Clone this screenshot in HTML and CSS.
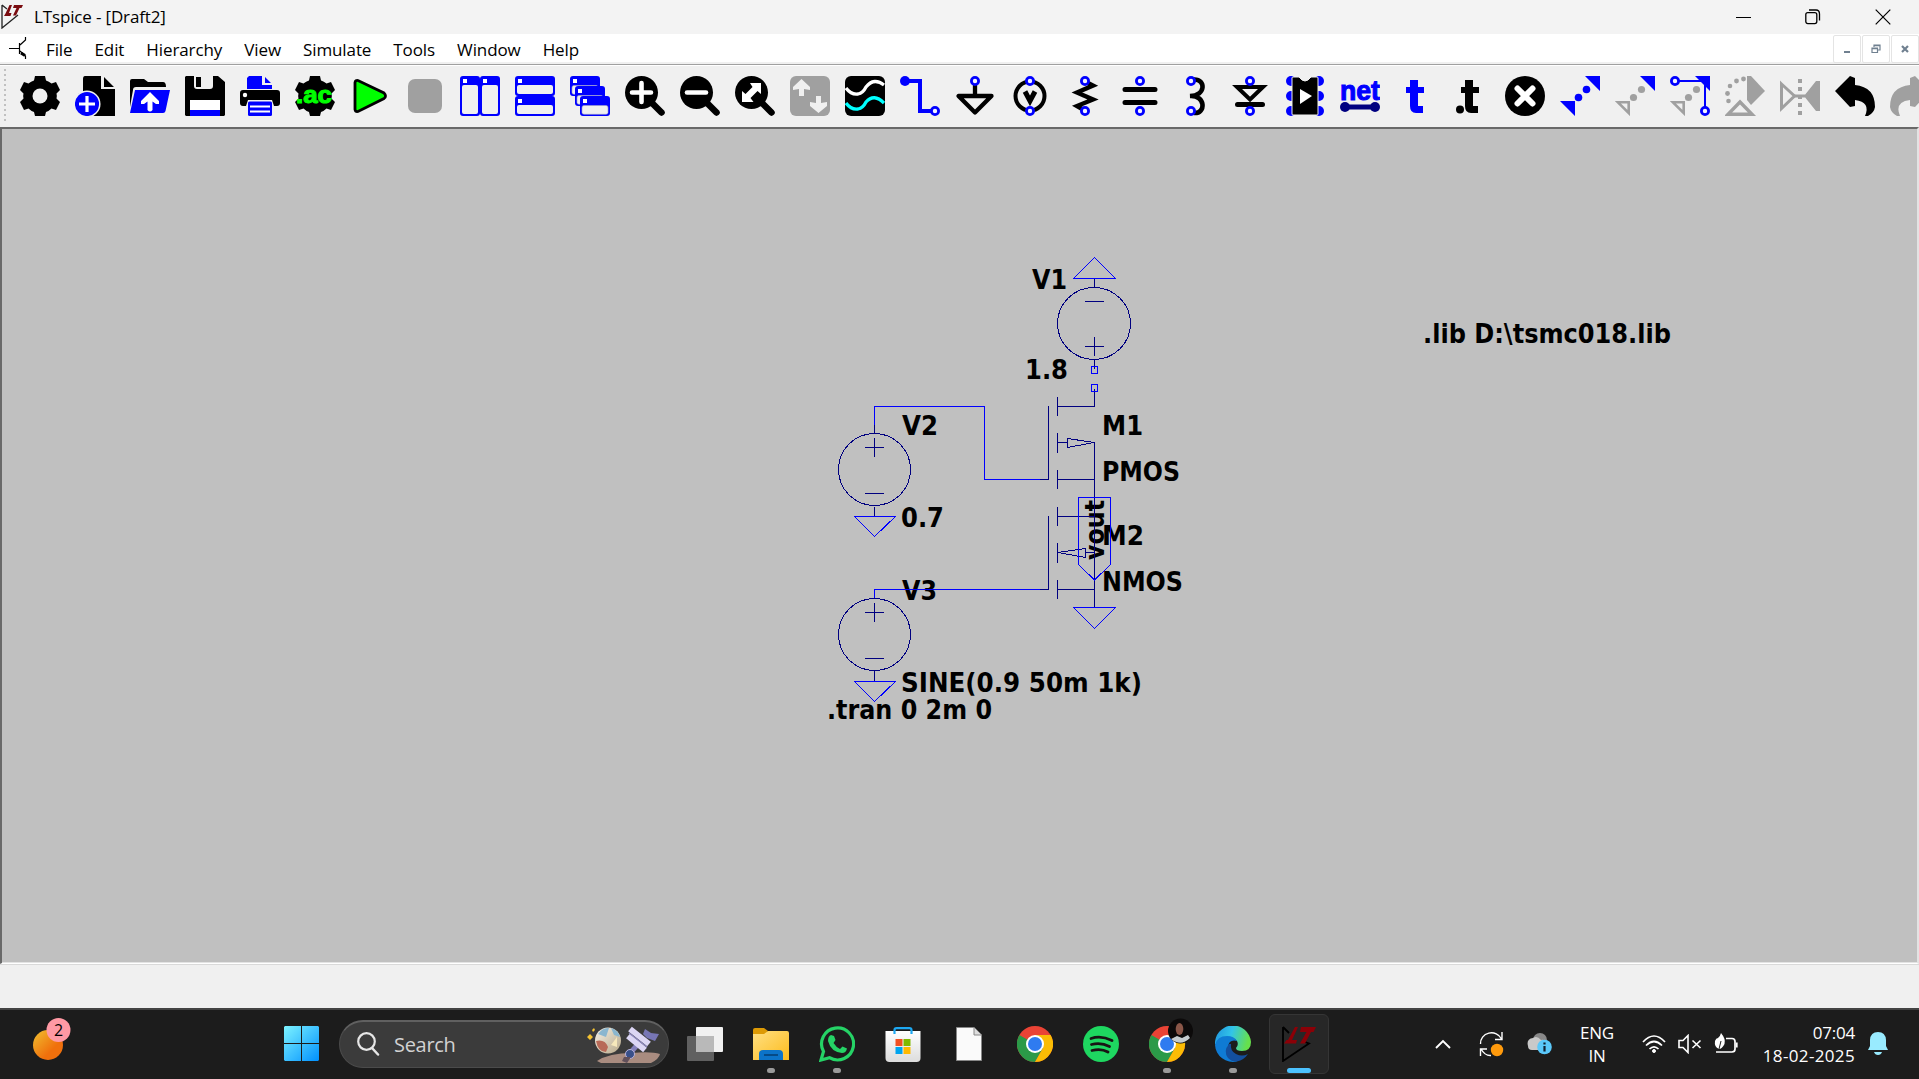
FILE: index.html
```
<!DOCTYPE html>
<html lang="en">
<head>
<meta charset="utf-8">
<title>LTspice - [Draft2]</title>
<link rel="stylesheet" href="styles.css">
</head>
<body>
<svg class="defs" width="0" height="0" aria-hidden="true">
  <defs>
    <path id="gear" d="M15 0H25L26 4.5Q29 5.500 31.500 7.500L36 6L40 14L36.500 17.500Q37.200 20 36.500 22.500L40 26L36 34L31.500 32.500Q29 35 26 36L25 40H15L14 36Q11 35 8.500 32.500L4 34L0 26L3.500 22.500Q2.800 20 3.500 17.500L0 14L4 6L8.500 7.500Q11 5.500 14 4.500Z"/>
    <g id="win"><rect x="0" y="0" width="30" height="20" rx="3" fill="#00f"/><rect x="2" y="9.500" width="26" height="8.800" rx="2" fill="#f0f0f0" stroke="#a0a0c8" stroke-width=".6"/><rect x="3" y="3" width="4" height="4" fill="#fff"/></g>
    <g id="lens"><path d="M25 25L36.500 36.500" stroke="#000" stroke-width="6.500" stroke-linecap="round"/><circle cx="16.500" cy="16.500" r="16.500"/></g>
    <circle id="pin" r="3.600" fill="#f4f4ff" stroke="#00f" stroke-width="2.800"/>
    <path id="tee" d="M15 4h8v7h6v6h-6v13h5v7h-7q-6 0-6-7v-13h-4v-6h4z"/>
    <path id="bend" d="M0 15L15 0L20 2V9Q40 11 40 31Q39 37 33 40H30Q36 26 20 24V30L15 31Z"/>
    <g id="chrome">
      <circle cx="18" cy="18" r="18" fill="#ea4335"/>
      <path d="M18 18L2.400 9A18 18 0 0 0 18 36L26 22Z" fill="#2b9a48"/>
      <path d="M18 9H33.600A18 18 0 0 1 18 36L26 22Z" fill="#fbbc05"/>
      <circle cx="18" cy="18" r="9" fill="#fff"/><circle cx="18" cy="18" r="7" fill="#2f7bf0"/>
    </g>
    <linearGradient id="gSun" x1="0" y1="0" x2="1" y2="1"><stop offset="0" stop-color="#f0c030"/><stop offset=".65" stop-color="#f0700c"/></linearGradient>
    <linearGradient id="gWin" x1="0" y1="0" x2="1" y2="1"><stop offset="0" stop-color="#7df3ff"/><stop offset="1" stop-color="#0090ff"/></linearGradient>
    <linearGradient id="gFold" x1="0" y1="0" x2="1" y2="1"><stop offset="0" stop-color="#ffe083"/><stop offset="1" stop-color="#fdbb1c"/></linearGradient>
    <linearGradient id="gEdge" x1="0" y1="0" x2="1" y2=".2"><stop offset="0" stop-color="#1e93e0"/><stop offset=".5" stop-color="#32c4e8"/><stop offset="1" stop-color="#66e04c"/></linearGradient>
    <linearGradient id="gBag" x1="0" y1="0" x2="0" y2="1"><stop offset="0" stop-color="#fff"/><stop offset="1" stop-color="#dcdcdc"/></linearGradient>
    <linearGradient id="gBall" x1="0" y1="0" x2="1" y2="1"><stop offset="0" stop-color="#f4f0e6"/><stop offset="1" stop-color="#b8a98a"/></linearGradient>
  </defs>
</svg>

<div class="screen">
  <header class="titlebar">
    <svg class="app-logo" width="22" height="26" viewBox="0 0 22 26"><path d="M1 2V25L17 12M1 2L6 6" fill="none" stroke="#222" stroke-width="1.300"/><path d="M8.500 2H11L8 10H10.500L9.500 13H3L4.500 10.500Z" fill="#7a0c10"/><path d="M13 2H22L20.500 5H18.500L15 12.500H12L15.500 5H12Z" fill="#7a0c10"/></svg>
    <span class="title">LTspice - [Draft2]</span>
    <div class="win-controls">
      <svg width="15" height="16" viewBox="0 0 15 16"><path d="M0 8.500H15" stroke="#000"/></svg>
      <svg width="16" height="16" viewBox="0 0 16 16" fill="none" stroke="#000" stroke-width="1.300"><rect x=".8" y="3.600" width="11" height="11" rx="2"/><path d="M4 1H11Q14.500 1 14.500 5V11.500"/></svg>
      <svg width="16" height="16" viewBox="0 0 16 16"><path d="M.7 .7L15.300 15.300M15.300 .7L.7 15.300" stroke="#000" stroke-width="1.200"/></svg>
    </div>
  </header>

  <nav class="menubar">
    <svg class="doc-icon" width="14" height="24" viewBox="0 0 14 24" fill="none" stroke="#000"><path d="M-3 12.500H7M7.500 7V18M8 9L13.500 4V1M8 15L13.500 20V23" stroke-width="1.200"/><path d="M9 17L13 19.500" stroke-width="3"/></svg>
    <ul class="menu"><li>File</li><li>Edit</li><li>Hierarchy</li><li>View</li><li>Simulate</li><li>Tools</li><li>Window</li><li>Help</li></ul>
    <div class="mdi">
      <span><svg width="10" height="10" viewBox="0 0 10 10"><path d="M2 8H8" stroke="#708090" stroke-width="2"/></svg></span>
      <span><svg width="10" height="10" viewBox="0 0 10 10" fill="none" stroke="#708090" stroke-width="1.200"><path d="M1 4H6.500V8.500H1ZM1 4.700H6.500M3 3V1.200H9V6H7M3 1.700H9"/></svg></span>
      <span><svg width="10" height="10" viewBox="0 0 10 10"><path d="M2 2L8 8M8 2L2 8" stroke="#708090" stroke-width="2.200"/></svg></span>
    </div>
  </nav>

  <div class="toolbar">
    <span class="grip"></span>
    <svg class="tool" viewBox="0 0 40 40"><use href="#gear"/><circle cx="20" cy="20" r="7.500" fill="#f0f0f0"/></svg>
    <svg class="tool" viewBox="0 0 40 40"><path d="M10 0H26V13H40V40H8V3Q8 0 10 0ZM29 1L39 11H29Z"/><circle cx="12" cy="28" r="12.800" fill="#00f" stroke="#f0f0f0" stroke-width="1.500"/><path d="M12 20V36M4 28H20" stroke="#fff" stroke-width="3.200"/></svg>
    <svg class="tool" viewBox="0 0 40 40"><path d="M0 31V5Q0 3 2 3H14L18 6H33Q36 6 36 11H6Q3 11 3 14Z"/><path d="M5 14H40L35.500 35Q35 37 33 37H0Z" fill="#00f"/><path d="M20 16L29 25V28H26L22.500 25.500V34Q20 37 17.500 34V25.500L14 28H11V25Z" fill="#fff"/></svg>
    <svg class="tool" viewBox="0 0 40 40"><path d="M1 0H9V10Q9 13 12 13H25Q28 13 28 10V0H33L40 6V39L39 40H1L0 39V1Z"/><path d="M11 1H16V11H11Z"/><path d="M5 24H35V34H5Z" fill="#fff"/><path d="M5 34H35V40H5Z" fill="#00f"/></svg>
    <svg class="tool" viewBox="0 0 40 40"><path d="M9 0H22V9H32V13H7V2ZM25 1L31 7H25Z" fill="#00f"/><path d="M3 14H37Q40 14 40 17V27Q40 30 37 30H34L32 24H8L6 30H3Q0 30 0 27V17Q0 14 3 14Z"/><circle cx="5" cy="19" r="2.200" fill="#fff"/><rect x="8" y="25.500" width="24" height="14.500" rx="1.500" fill="#00f"/><path d="M10 30.500H30M10 35.500H30" stroke="#fff" stroke-width="1.800"/></svg>
    <svg class="tool" viewBox="0 0 40 40"><use href="#gear"/><text class="ac" x="1" y="27" textLength="36" lengthAdjust="spacingAndGlyphs">.ac</text></svg>
    <svg class="tool" viewBox="0 0 40 40"><path d="M5 6.500Q5.500 4 8 4.500L34 17Q37 20 34 22.500L8 35.500Q5.500 36 5 33.500Z" fill="#0f0" stroke="#000" stroke-width="2.800"/></svg>
    <svg class="tool" viewBox="0 0 40 40"><rect x="3" y="3" width="34" height="34" rx="7" fill="#a0a0a0"/></svg>
    <svg class="tool" viewBox="0 0 40 40"><g id="tall"><rect width="20" height="40" rx="3" fill="#00f"/><rect x="2" y="9" width="16" height="29" rx="2" fill="#f0f0f0"/><rect x="3" y="3" width="4" height="4" fill="#fff"/></g><use href="#tall" x="20"/></svg>
    <svg class="tool" viewBox="0 0 40 40"><g id="wide"><rect width="40" height="20" rx="3" fill="#00f"/><rect x="2" y="9" width="36" height="9" rx="2" fill="#f0f0f0"/><rect x="3" y="3" width="4" height="4" fill="#fff"/></g><use href="#wide" y="20"/></svg>
    <svg class="tool" viewBox="0 0 40 40"><use href="#win"/><use href="#win" x="5" y="10"/><use href="#win" x="10" y="20"/></svg>
    <svg class="tool" viewBox="0 0 40 40"><use href="#lens"/><path d="M16.500 7V26M7 16.500H26" stroke="#fff" stroke-width="4.600" stroke-linecap="round"/></svg>
    <svg class="tool" viewBox="0 0 40 40"><use href="#lens"/><path d="M7 16.500H26" stroke="#fff" stroke-width="4.600" stroke-linecap="round"/></svg>
    <svg class="tool" viewBox="0 0 40 40"><use href="#lens"/><path d="M15 7H26V18L22.500 15L15.500 22L18.500 26H7V15L10.500 18L17.500 11Z" fill="#fff"/></svg>
    <svg class="tool" viewBox="0 0 40 40"><rect width="40" height="40" rx="6" fill="#a0a0a0"/><path d="M11.500 3L20 11V14L14 13V20H9V13L3 14V11ZM28.500 37L20 30V26L26 27V20H31V27L37 26V30Z" fill="#f0f0f0"/></svg>
    <svg class="tool" viewBox="0 0 40 40"><rect width="40" height="40" rx="6"/><path d="M1 12Q6 19 13 18Q18 17 21 11Q29 1 39 9" fill="none" stroke="#fff" stroke-width="3.300"/><path d="M1 27Q6 34 13 33Q18 32 21 26Q29 17 39 27" fill="none" stroke="#0ff" stroke-width="3.300"/></svg>
    <svg class="tool" viewBox="0 0 40 40"><path d="M5 5H20V35H31" fill="none" stroke="#00f" stroke-width="4"/><circle cx="5" cy="5" r="5" fill="#00f"/><use href="#pin" x="35" y="35"/></svg>
    <svg class="tool" viewBox="0 0 40 40"><path d="M20 9V20M3.500 20H36.500L20 36.500Z" fill="none" stroke="#000" stroke-width="4.300" stroke-linejoin="round"/><use href="#pin" x="20" y="5"/></svg>
    <svg class="tool" viewBox="0 0 40 40"><circle cx="20" cy="20" r="14.500" fill="none" stroke="#000" stroke-width="4"/><path d="M15 15.500L20 25L25 15.500" fill="none" stroke="#000" stroke-width="5"/><use href="#pin" x="20" y="5"/><use href="#pin" x="20" y="35"/></svg>
    <svg class="tool" viewBox="0 0 40 40"><path d="M22 6.500L28 9.500L12 16.500L28 23.500L12 30L19 34" fill="none" stroke="#000" stroke-width="4.400"/><use href="#pin" x="20" y="5"/><use href="#pin" x="20" y="35"/></svg>
    <svg class="tool" viewBox="0 0 40 40"><path d="M5 13.500H35M5 26.500H35" stroke="#000" stroke-width="5" stroke-linecap="round"/><use href="#pin" x="20" y="5"/><use href="#pin" x="20" y="35"/></svg>
    <svg class="tool" viewBox="0 0 40 40"><path d="M19 3.500C31 3 31 20 15 20C31 19 31 38 19 37" fill="none" stroke="#000" stroke-width="4.600"/><use href="#pin" x="16" y="5"/><use href="#pin" x="16" y="35"/></svg>
    <svg class="tool" viewBox="0 0 40 40"><path d="M7 11H33L20 23.500Z" fill="#f0f0f0" stroke="#000" stroke-width="4"/><path d="M7.500 28.500H32.500" stroke="#000" stroke-width="5" stroke-linecap="round"/><use href="#pin" x="20" y="5"/><use href="#pin" x="20" y="35"/></svg>
    <svg class="tool" viewBox="0 0 40 40"><g fill="#00f"><circle cx="6" cy="5" r="5"/><circle cx="6" cy="20" r="5"/><circle cx="6" cy="35" r="5"/><circle cx="34" cy="5" r="5"/><circle cx="34" cy="20" r="5"/><circle cx="34" cy="35" r="5"/></g><path d="M8 1H14Q20 9 26 1H32Q33 1 33 2V38Q33 39 32 39H8Q7 39 7 38V2Q7 1 8 1Z" stroke="#f0f0f0"/><path d="M15 13L27 20L15 28Z" fill="#fff"/></svg>
    <svg class="tool" viewBox="0 0 40 40"><text class="net" x="0" y="23.500" textLength="40" lengthAdjust="spacingAndGlyphs">net</text><path d="M5 31H35" stroke="#000080" stroke-width="5"/><circle cx="5" cy="31" r="5" fill="#000080"/><circle cx="35" cy="31" r="5" fill="#000080"/></svg>
    <svg class="tool" viewBox="0 0 40 40"><use href="#tee" fill="#00f"/></svg>
    <svg class="tool" viewBox="0 0 40 40"><use href="#tee"/><circle cx="10" cy="33.500" r="4"/></svg>
    <svg class="tool" viewBox="0 0 40 40"><circle cx="20" cy="20" r="20"/><path d="M12.500 12.500L27.500 27.500M27.500 12.500L12.500 27.500" stroke="#fff" stroke-width="6" stroke-linecap="round"/></svg>
    <svg class="tool" viewBox="0 0 40 40" fill="#00f"><path d="M25 0H40V15ZM0 25H15V40Z"/><circle cx="26.500" cy="13.500" r="3.800"/><circle cx="18.500" cy="21.500" r="3.800"/></svg>
    <svg class="tool" viewBox="0 0 40 40" fill="#a0a0a0"><path d="M25 0H40V15Z" fill="#00f"/><path d="M3 26.300H13.700V37Z" fill="none" stroke="#a0a0a0" stroke-width="2.600"/><circle cx="26.500" cy="13.500" r="3.600"/><circle cx="18.500" cy="21.500" r="3.600"/></svg>
    <svg class="tool" viewBox="0 0 40 40" fill="#a0a0a0"><path d="M25 0H40V15Z" fill="#00f"/><path d="M3 26.300H13.700V37Z" fill="none" stroke="#a0a0a0" stroke-width="2.600"/><circle cx="26.500" cy="13.500" r="3.600"/><circle cx="18.500" cy="21.500" r="3.600"/><path d="M5 5H35V35" fill="none" stroke="#00f" stroke-width="2"/><use href="#pin" x="5" y="5"/><use href="#pin" x="35" y="35"/></svg>
    <svg class="tool" viewBox="0 0 40 40" fill="#a0a0a0"><path d="M22 0H26L40 15L26 29L22 24Z"/><path d="M3 38.300H27L15 26Z" fill="#f0f0f0" stroke="#a0a0a0" stroke-width="3.400"/><circle cx="18.500" cy="3" r="2.400"/><circle cx="11.500" cy="5" r="2.400"/><circle cx="5" cy="10" r="2.300"/><circle cx="2.500" cy="17.500" r="2.400"/><circle cx="3.500" cy="25" r="2.300"/></svg>
    <svg class="tool" viewBox="0 0 40 40" fill="#a0a0a0"><path d="M1.500 8L14.500 20L1.500 32.500Z" fill="none" stroke="#a0a0a0" stroke-width="3"/><path d="M40 5V35H36L24 20L36 5ZM13 18.500H26V21.500H13Z"/><path d="M20 3V40" stroke="#a0a0a0" stroke-width="4" stroke-dasharray="4 4"/></svg>
    <svg class="tool" viewBox="0 0 40 40"><use href="#bend"/></svg>
    <svg class="tool" viewBox="0 0 40 40" fill="#a0a0a0"><use href="#bend" transform="translate(40 0) scale(-1 1)"/></svg>
  </div>

  <main class="canvas">
    <svg class="schematic" width="1915" height="834" viewBox="2 129 1915 834">
      <g class="text">
        <text x="1032" y="288.500" textLength="35" lengthAdjust="spacingAndGlyphs">V1</text>
        <text x="1025" y="379" textLength="43" lengthAdjust="spacingAndGlyphs">1.8</text>
        <text x="902" y="434.500" textLength="36" lengthAdjust="spacingAndGlyphs">V2</text>
        <text x="901" y="526.500" textLength="43" lengthAdjust="spacingAndGlyphs">0.7</text>
        <text x="1102" y="434.500" textLength="41" lengthAdjust="spacingAndGlyphs">M1</text>
        <text x="1102" y="480.500" textLength="78" lengthAdjust="spacingAndGlyphs">PMOS</text>
        <text x="1102" y="544.500" textLength="42" lengthAdjust="spacingAndGlyphs">M2</text>
        <text x="1102" y="590.500" textLength="81" lengthAdjust="spacingAndGlyphs">NMOS</text>
        <text x="902" y="599.500" textLength="35" lengthAdjust="spacingAndGlyphs">V3</text>
        <text x="901" y="691.500" textLength="241" lengthAdjust="spacingAndGlyphs">SINE(0.9 50m 1k)</text>
        <text x="827" y="718.500" textLength="165" lengthAdjust="spacingAndGlyphs">.tran 0 2m 0</text>
        <text x="1423" y="343" textLength="248" lengthAdjust="spacingAndGlyphs">.lib D:\tsmc018.lib</text>
        <text transform="translate(1104 560) rotate(-90)" textLength="60" lengthAdjust="spacingAndGlyphs">vout</text>
      </g>
      <g class="part">
        <path d="M1094.500 278V287.500M1085 301.500H1104M1085 346.500H1104M1094.500 337V356M1094.500 359.500V369M1094.500 389V406.500H1057.500M1057.500 397V416M1048.500 406V479.500H1040M1057.500 433V453M1057.500 442.500H1067.500V438.500L1094 442.500L1067.500 447.500V442.500M1094.500 442V607M1057.500 470V489M1057.500 479.500H1094.500"/>
        <ellipse cx="1094" cy="323.500" rx="36.500" ry="36"/>
        <path d="M874.500 425V433.500M865 447.500H884M874.500 438V457M865 493.500H884M874.500 506.500V516"/>
        <circle cx="874.500" cy="469.500" r="36"/>
        <path d="M1057.500 507V526M1057.500 516.500H1094.500M1048.500 516V589.500H1040M1057.500 543V563M1094 552.500H1085.500V548.500L1058 552.500L1085.500 557.500V552.500M1057.500 580V599M1057.500 589.500H1094.500"/>
        <path d="M874.500 589.500V598.500M865 612.500H884M874.500 603V622M865 658.500H884M874.500 670.500V681"/>
        <circle cx="874.500" cy="634.500" r="36"/>
      </g>
      <g class="wire">
        <path d="M1073.500 278.500H1115.500L1094.500 257.500Z"/>
        <path d="M1091.500 366.500H1097.500V373.500H1091.500ZM1091.500 384.500H1097.500V391.500H1091.500Z"/>
        <path d="M874.500 425V406.500H984.500V479.500H1040"/>
        <path d="M854.500 516.500H895.500L874.500 536.500Z"/>
        <path d="M1078.500 497.500H1110.500V564.500L1094.500 580L1078.500 564.500Z"/>
        <path d="M1073.500 607.500H1115.500L1094.500 628.500Z"/>
        <path d="M874.500 598V589.500H1040"/>
        <path d="M854.500 681.500H895.500L874.500 701.500Z"/>
      </g>
    </svg>
  </main>
  <div class="statusbar"></div>

  <footer class="taskbar">
    <div class="widget"><svg width="42" height="44" viewBox="0 0 42 44"><circle cx="15" cy="29" r="15" fill="url(#gSun)"/><circle cx="25.500" cy="14" r="12" fill="#ff99a4"/></svg><span class="badge">2</span></div>
    <svg class="start" width="35" height="35" viewBox="0 0 35 35"><path d="M1 0H17V17H0V1ZM18 0H34L35 1V17H18ZM0 18H17V35H1L0 34ZM18 18H35V34L34 35H18Z" fill="url(#gWin)"/></svg>
    <div class="search">
      <svg width="23" height="24" viewBox="0 0 23 24"><circle cx="9.500" cy="9.500" r="8.300" fill="none" stroke="#e6e6e6" stroke-width="2.200"/><path d="M15 16L21 22.500" stroke="#e6e6e6" stroke-width="2.500" stroke-linecap="round"/></svg>
      <span>Search</span>
      <svg class="art" width="74" height="38" viewBox="0 0 74 38">
        <path d="M10 36Q22 28 45 28Q64 26 73 29Q72 34 64 38H14Z" fill="#a98c80"/>
        <circle cx="21" cy="15.500" r="13" fill="url(#gBall)"/><path d="M9 16Q18 14 21 22L19 27Q11 27 9 16Z" fill="#b86a58"/><path d="M11 9Q16 2 22 3L19 12ZM24 3Q31 5 33 12L27 10Z" fill="#8ab6cf"/><path d="M24 20L30 12L30 22Z" fill="#f6e8bb"/>
        <path d="M0 12L3 9L6 12L3 15ZM5 5L7 3L8 5L6 7Z" fill="#f5c332"/>
        <path d="M44 27L52 18" stroke="#8580bb" stroke-width="5"/><path d="M43 4L62 19M41 11L58 25" stroke="#dcd6f4" stroke-width="6"/><path d="M42 8L60 22" stroke="#8d88bd" stroke-width="1.500"/><path d="M56 9L58 4L64 8L72 9L68 16L60 13Z" fill="#7776b5"/><circle cx="43" cy="29" r="4.500" fill="#39508a" stroke="#b9b4dc"/><path d="M37 32H44L40 38L35 36Z" fill="#61505b"/>
      </svg>
    </div>
    <div class="apps">
      <span class="app"><svg width="36" height="36" viewBox="0 0 36 36"><rect x="9" y="1" width="27" height="25" rx="1" fill="#f1f1f1"/><rect x="0" y="10" width="27" height="25" rx="1" fill="#606060"/><path d="M9 10H27V26H9Z" fill="#b9b9b9"/></svg></span>
      <span class="app run"><svg width="36" height="36" viewBox="0 0 36 36"><path d="M0 4Q0 2 2 2H11L15 5L12 10H0Z" fill="#dd9a05"/><path d="M0 8H11L15 5H34Q36 5 36 7V34H0Z" fill="url(#gFold)"/><path d="M6 34V28Q6 24 10 24H26Q30 24 30 28V34Z" fill="#0c73c8"/><path d="M11 29H25" stroke="#064a86" stroke-width="2"/></svg></span>
      <span class="app run"><svg width="36" height="36" viewBox="0 0 36 36"><path d="M2 34L4.500 25.500A16 16 0 1 1 10.500 31.700Z" fill="none" stroke="#25d366" stroke-width="3.200"/><path d="M12 9L15 10L16.500 14L14.500 17Q17 21 21 23L23.500 20.500L28 22.500Q27 27 23 27Q12 26 9 15Q9 10 12 9Z" fill="#25d366"/></svg></span>
      <span class="app"><svg width="36" height="36" viewBox="0 0 36 36"><path d="M.5 5H35.500V32Q35.500 36 31.500 36H4.500Q.5 36 .5 32Z" fill="url(#gBag)"/><path d="M9.500 8V4Q9.500 2.200 11.500 2.200H24.500Q26.500 2.200 26.500 4V8" fill="none" stroke="#1da8f2" stroke-width="2.200"/><path d="M10.500 13H17.500V20H10.500Z" fill="#f25022"/><path d="M18.500 13H25.500V20H18.500Z" fill="#7fba00"/><path d="M10.500 21H17.500V28H10.500Z" fill="#00a4ef"/><path d="M18.500 21H25.500V28H18.500Z" fill="#ffb900"/></svg></span>
      <span class="app"><svg width="36" height="36" viewBox="0 0 36 36"><path d="M5.500 1.500H23L30.500 9V34.500H5.500Z" fill="#fafafa" stroke="#888"/><path d="M23 1.500V9H30.500" fill="#ddd" stroke="#888"/></svg></span>
      <span class="app"><svg width="36" height="36" viewBox="0 0 36 36"><use href="#chrome"/></svg></span>
      <span class="app"><svg width="36" height="36" viewBox="0 0 36 36"><circle cx="18" cy="18" r="18" fill="#1ed760"/><path d="M8 12.500Q18 9 29 14.500M8.500 18.500Q18 16 26.500 20.500M9 24.500Q18 22 25 26" fill="none" stroke="#191414" stroke-width="2.800" stroke-linecap="round"/></svg></span>
      <span class="app run"><svg class="over" width="46" height="44" viewBox="0 -8 46 44"><use href="#chrome"/><circle cx="31.500" cy="5" r="12.500" fill="#0c0a0a"/><ellipse cx="30.500" cy="3" rx="3.800" ry="6" fill="#8a5648"/><path d="M22 13L28 10L33 12L39 9L41 12Q32 21 22 13Z" fill="#c5cdd0"/></svg></span>
      <span class="app run"><svg width="36" height="36" viewBox="0 0 36 36"><path d="M0 19A18 18 0 0 1 36 16Q36 25 27 25Q21 25 21 22Q24 19 22 15Q18 10 11 12Q3 14 0 19Z" fill="url(#gEdge)"/><path d="M0 19Q2 10 12 10Q19 10 22 15Q14 13 13 21Q13 30 22 35.500A18 18 0 0 1 0 19Z" fill="#0f7bd4"/><path d="M14 18Q8 25 13 32Q17 36 22 35.500Q29 34 33 28Q27 31 21 28Q15 25 16 18Z" fill="#134f9e"/></svg></span>
      <span class="app run active"><svg width="36" height="36" viewBox="0 0 36 36"><path d="M2 1V35L28 17.500L24 16M2 1L8 7" fill="none" stroke="#000" stroke-width="1.800"/><path d="M14 1H17L11 14H16L15 17.500H3L5.500 14H7Z" fill="#8b0007"/><path d="M20 1H35L32.500 6H30L24 17.500H19L25.500 6H19Z" fill="#8b0007"/></svg></span>
    </div>
    <div class="tray">
      <svg class="chev" width="16" height="10" viewBox="0 0 16 10"><path d="M1 9L8 2L15 9" fill="none" stroke="#fff" stroke-width="1.900"/></svg>
      <svg class="sync" width="25" height="26" viewBox="0 0 25 26"><path d="M1.500 13A11 10.500 0 0 1 22.500 8M23 1V8.500H16M8 18H1.500V25M2 18Q6 25 12 24.500" fill="none" stroke="#fff" stroke-width="1.400"/><circle cx="18" cy="19" r="6.200" fill="#ff9a0c"/></svg>
      <svg class="cloud" width="26" height="22" viewBox="0 0 26 22"><circle cx="13" cy="7" r="7" fill="#888"/><path d="M1 13Q-1 6 6 5Q10 2 14 7Q18 6 19 10L13 17H5Q1 17 1 13Z" fill="#c9c9c9"/><circle cx="17.500" cy="14" r="7.300" fill="#5ac8fa"/><path d="M17.500 9.500V11.500M17.500 13V18.500" stroke="#123" stroke-width="2.200"/></svg>
      <div class="lang"><span>ENG</span><span>IN</span></div>
      <svg class="wifi" width="24" height="20" viewBox="0 0 24 20" fill="none" stroke="#fff" stroke-width="1.700"><path d="M1 8Q12 -4 23 8M4 11.500Q12 3.500 20 11.500M7.500 15Q12 10.500 16.500 15"/><circle cx="12" cy="17" r="1.500" fill="#fff" stroke-width="1"/></svg>
      <svg class="vol" width="24" height="20" viewBox="0 0 24 20" fill="none" stroke="#fff" stroke-width="1.600"><path d="M1 6.500H5L10 1.500V18.500L5 13.500H1ZM14.500 6.500L22.500 14M22.500 6.500L14.500 14"/></svg>
      <svg class="bat" width="24" height="22" viewBox="0 0 24 22" fill="none" stroke="#fff" stroke-width="1.700"><path d="M12 5.500H18Q21 5.500 21 8.500V16Q21 19 18 19H2M22.800 9.500V14.500" /><path d="M7 0Q12 6 10.500 11Q8 16 5 16Q0 14 1 8Q2 5 4 5Q6 4 7 0Z" fill="#fff" stroke="none"/><path d="M7 8L4.500 18" stroke="#1c1c1c" stroke-width="1"/></svg>
      <div class="clock"><span>07:04</span><span class="date">18-02-2025</span></div>
      <svg class="bell" width="20" height="24" viewBox="0 0 20 24"><path d="M10 0Q17.500 0 18 8V14L20 18H0L2 14V8Q2.500 0 10 0ZM6 20H14Q13 23 10 23Q7 23 6 20Z" fill="#99ebff"/></svg>
    </div>
  </footer>
</div>
</body>
</html>
```
FILE: styles.css
```
* { box-sizing: border-box; }
html, body { margin: 0; height: 100%; overflow: hidden; }
body { font-family: "Open Sans", "Noto Sans", sans-serif; color: #000; }
svg { display: block; flex: none; }
.defs { position: absolute; }
.screen { display: flex; flex-direction: column; width: 1919px; height: 1079px; background: #f0f0f0; }

.titlebar { display: flex; align-items: center; height: 34px; background: #f3f3f3; padding: 0 28px 0 1px; }
.app-logo { margin-top: -2px; }
.title { margin-left: 11px; font-size: 17px; letter-spacing: -.15px; line-height: 34px; }
.win-controls { display: flex; align-items: center; gap: 54px; margin-left: auto; margin-top: -1px; }

.menubar { display: flex; align-items: center; height: 28px; background: #fff; padding-left: 12px; }
.doc-icon { overflow: visible; }
.menu { display: flex; list-style: none; margin: 2px 0 0 20px; padding: 0; gap: 22px; font-size: 17px; letter-spacing: -.1px; }
.mdi { display: flex; gap: 1px; margin-left: auto; margin-top: 2px; }
.mdi span { display: flex; align-items: center; justify-content: center; width: 28px; height: 28px; border: 1px solid #e4e4e4; border-radius: 2px; }

.toolbar { display: flex; align-items: center; gap: 15px; height: 65px; margin-top: 2px; padding: 0 0 2px 4px; border-top: 1px solid #a0a0a0; box-shadow: inset 0 1px #fff; overflow: hidden; }
.grip { flex: none; width: 2px; height: 54px; margin-right: -1px; background: repeating-linear-gradient(#c0c0c0 0 2px, transparent 2px 5px); }
.tool { width: 40px; height: 40px; }
.ac, .net { font-family: "Liberation Sans", sans-serif; font-weight: 700; }
.ac { font-size: 24px; fill: #0f0; stroke: #0f0; stroke-width: 1; }
.net { font-size: 27px; fill: #00f; stroke: #00f; stroke-width: 1; }

.canvas { height: 837px; margin-top: -2px; background: #c0c0c0; border: solid; border-width: 2px 2px 1px; border-color: #696969 #e3e3e3 #fff #696969; box-shadow: inset 0 -1px #e3e3e3; }
.schematic { shape-rendering: crispEdges; }
.part, .wire { fill: none; stroke: #00f; stroke-width: 1; }
.part { stroke: #000080; }
.text { font: 700 25.800px "DejaVu Sans", sans-serif; fill: #000; }
.statusbar { flex: 1; border-top: 1px solid #d9d9d9; }

.taskbar { position: relative; display: flex; align-items: center; height: 71px; padding-bottom: 2px; border-top: 2px solid #434343; background: #1c1c1c; color: #fff; }
.widget { position: relative; width: 42px; height: 44px; margin: -12px 0 0 33px; }
.badge { position: absolute; left: 19px; top: 3px; width: 13px; text-align: center; font-size: 16px; line-height: 22px; color: #000; }
.start { margin-left: 209px; }
.search { display: flex; align-items: center; width: 330px; height: 48px; margin-left: 20px; padding: 0 7px 0 17px; border: 1px solid #4b4b4b; border-top: 2px solid #606060; border-radius: 24px; background: #3b3b3b; font-size: 20px; color: #d2d2d2; }
.search span { margin-left: 14px; letter-spacing: -.3px; }
.art { margin-left: auto; }
.apps { display: flex; gap: 6px; margin-left: 6px; }
.app { position: relative; display: flex; align-items: center; justify-content: center; width: 60px; height: 60px; border-radius: 6px; }
.over { margin: -8px 0 0 10px; }
.run::after { content: ""; position: absolute; left: 26px; bottom: 1px; width: 8px; height: 5px; border-radius: 3px; background: #9a9a9a; }
.active { background: #272727; border: 1px solid #353535; }
.active::after { left: 17px; bottom: 0; width: 24px; background: #4cc2ff; }
.tray { display: flex; align-items: center; margin-left: auto; padding-right: 31px; }
.sync { margin-left: 28px; }
.cloud { margin-left: 23px; }
.lang, .clock { display: flex; flex-direction: column; font-size: 17px; line-height: 23px; letter-spacing: -.2px; }
.lang { width: 42px; margin-left: 23px; align-items: center; }
.wifi { margin-left: 24px; }
.vol { margin-left: 12px; }
.bat { margin-left: 12px; }
.clock { width: 95px; margin-left: 22px; align-items: flex-end; }
.date { letter-spacing: .35px; }
.bell { margin-left: 13px; }
```
